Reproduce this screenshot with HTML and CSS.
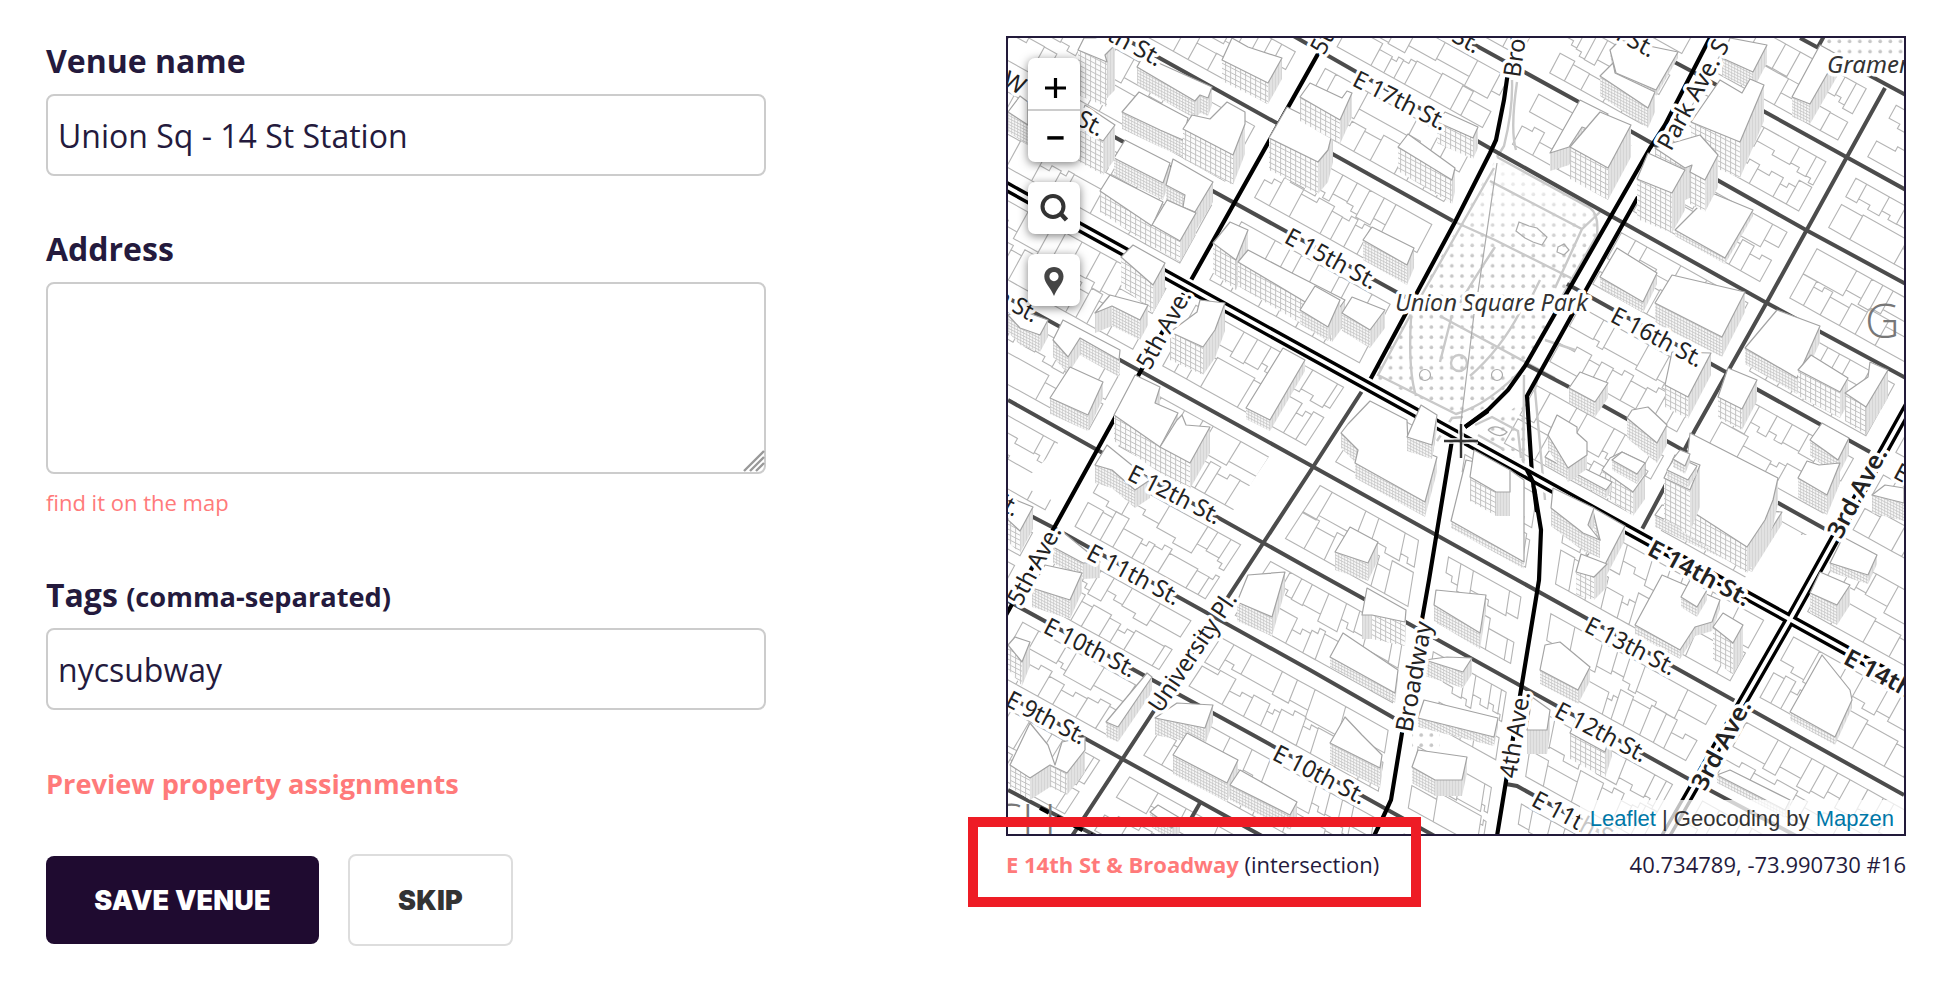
FILE: index.html
```html
<!DOCTYPE html>
<html lang="en">
<head>
<meta charset="utf-8">
<title>Venue editor</title>
<link rel="stylesheet" href="styles.css">
</head>
<body>
<main class="page">
  <form class="form">
    <label class="label" for="venue">Venue name</label>
    <input class="field" id="venue" type="text" value="Union Sq - 14 St Station">
    <label class="label" for="address">Address</label>
    <div class="area-wrap">
      <textarea class="field area" id="address"></textarea>
      <svg class="grip" width="22" height="22" viewBox="0 0 22 22"><path d="M1 21L21 1M7 21L21 7M13 21L21 13"/></svg>
    </div>
    <a class="find">find it on the map</a>
    <label class="label tags" for="tags">Tags <small>(comma-separated)</small></label>
    <input class="field" id="tags" type="text" value="nycsubway">
    <a class="preview">Preview property assignments</a>
    <div class="buttons">
      <button class="btn primary" type="button">SAVE VENUE</button>
      <button class="btn" type="button">SKIP</button>
    </div>
  </form>

  <section class="side">
    <div class="map">
      <svg class="canvas" width="896" height="796" viewBox="1008 38 896 796">
        <defs>
          <pattern id="grid" width="5" height="5" patternUnits="userSpaceOnUse" patternTransform="skewY(27)"><rect width="5" height="5" fill="#fcfcfc"/><path d="M0 .5H5M.5 0V5" stroke="#c2c2c2" stroke-width=".9"/></pattern>
          <pattern id="fine" width="3" height="3" patternUnits="userSpaceOnUse" patternTransform="skewY(27)"><rect width="3" height="3" fill="#f6f6f6"/><path d="M0 .5H3M.5 0V3" stroke="#c4c4c4" stroke-width=".7"/></pattern>
          <pattern id="side" width="3" height="3" patternUnits="userSpaceOnUse"><rect width="3" height="3" fill="#e2e2e2"/><path d="M.5 0V3" stroke="#d2d2d2" stroke-width=".8"/></pattern>
          <pattern id="dots" width="10.2" height="10.2" patternUnits="userSpaceOnUse" x="1459" y="273"><circle cx="3" cy="3" r="1.8" fill="#c6c6c6"/></pattern>
          <linearGradient id="fade" x1="0" y1="150" x2="0" y2="260" gradientUnits="userSpaceOnUse"><stop offset="0" stop-color="#fff" stop-opacity=".9"/><stop offset="1" stop-color="#fff" stop-opacity="0"/></linearGradient>
        </defs>
        <g id="lots" class="lots"></g>
        <path d="M1270 455L1306 473L1268 532L1232 512ZM1775 535L1822 535L1790 605L1742 582ZM1070 425L1092 450L1062 505L1020 485L1050 455Z" fill="#fff"/>
        <g>
          <path d="M1497 157L1600 215L1597 235L1555 310L1525 366L1490 405L1466 418L1373 378Z" fill="#fff"/>
          <path d="M1497 157L1600 215L1597 235L1555 310L1525 366L1490 405L1466 418L1373 378Z" fill="url(#dots)"/>
          <path d="M1497 157L1600 215L1597 235L1540 330L1373 378Z" fill="url(#fade)"/>
          <path d="M1527 398L1532 470L1478 435Z" fill="url(#dots)"/>
          <path d="M1826 38H1904V62H1826Z" fill="#fff"/>
          <path d="M1826 38H1904V62H1826Z" fill="url(#dots)"/>
          <path d="M1412 730H1440V752H1412Z" fill="url(#dots)"/>
        </g>
        <g class="paths">
          <path d="M1497 157L1590 208Q1599 214 1597 235L1553 312M1494 168L1412 312L1378 375L1456 414Q1490 404 1525 366M1490 181L1582 229L1600 212M1582 229L1555 288M1455 222L1495 240L1575 280M1495 247Q1470 285 1460 303M1440 316L1555 378M1411 318Q1408 370 1416 396M1452 315L1440 362M1520 312Q1500 350 1470 376M1540 280L1530 300M1512 80Q1513 110 1504 146L1497 157M1517 82Q1510 130 1516 150M1475 425L1492 417L1518 431L1521 458M1478 435L1503 449M1437 441L1452 418L1463 417M1538 375L1535 390L1545 500M1524 375L1523 500M1545 340L1575 350"/>
          <circle cx="1459" cy="363" r="8"/>
        </g>
        <g class="thin">
          <circle cx="1425" cy="375" r="5.5"/><circle cx="1497" cy="375" r="5.5"/>
          <path d="M1497 163L1478 292M1474 314L1460 430M1519 222L1529 226L1537 228L1547 237L1542 245L1533 242L1525 238L1516 231ZM1558 247L1564 244L1569 250L1564 255L1557 252ZM1488 430Q1495 423 1507 432Q1500 440 1488 430"/>
        </g>
        <g class="minor">
          <path d="M1120 36L1453 221M1567 284L1870 452"/><path d="M1290 34L1500 154L1765 302L1906 378"/><path d="M1455 34L1577 101L1806 230L1906 284"/>
          <path d="M1635 41L1695 73L1765 112L1906 190"/><path d="M1800 38L1906 95"/><path d="M1080 118L1420 305"/><path d="M1527 365L1569 387"/><path d="M1600 404L1825 529"/>
          <path d="M1008 298L1310 465L1586 618L1904 795"/><path d="M1008 400L1310 569L1685 777L1800 838"/>
          <path d="M1008 504L1054 528L1310 670L1394 718"/><path d="M1506 784L1517 786L1600 832"/><path d="M1008 601L1253 735L1440 839"/><path d="M1008 696L1262 836"/>
          <path d="M1008 790L1100 838"/>
          <path d="M1364 388L1313 467L1228 597L1150 717L1072 836"/><path d="M1200 803L1188 824"/>
          <path d="M1824 36L1818 47M1885 88L1848 155L1767 302L1695 430L1640 533"/>
        </g>
        <g class="major">
          <path d="M1337 20L1190 282L1054 528L1000 626"/>
          <path d="M1514 30L1504 100L1496 140L1490 153L1455 222L1370 380"/>
          <path d="M1452 440L1429 580L1402 733L1391 800L1385 813L1374 836"/>
          <path d="M1714 30L1665 125L1650 148L1525 366L1508 390L1488 410L1465 427"/>
          <path d="M1638 197L1587 288L1527 396L1532 475L1541 530L1539 580L1497 836"/>
          <path d="M1040 808L1092 835" stroke-dasharray="10 9"/>
          <g class="casing"><path d="M1000 183L1860 658L1920 691"/><path d="M1912 400L1788 623L1660 846"/></g>
          <g class="twin"><path d="M1000 183L1860 658L1920 691"/><path d="M1912 400L1788 623L1660 846"/></g>
          <g class="core"><path d="M1000 183L1860 658L1920 691"/><path d="M1912 400L1788 623L1660 846"/></g>
          <path d="M1465 427L1488 411M1527 470L1533 482L1537 512"/>
        </g>
        <g id="buildings" class="buildings"></g>
        <g id="names" class="names"></g>
        <g class="names">
          <text class="park" x="1395" y="311" textLength="193">Union Square Park</text>
          <text class="park" x="1827" y="73">Gramercy</text>
          <text class="area-name" x="1865" y="338">G</text>
          <text class="area-name" x="992" y="838">CH</text>
        </g>
        <path d="M1444 441H1478M1461 424V458" stroke="#fff" stroke-opacity=".8" stroke-width="6"/>
        <path d="M1444 441H1478M1461 424V458" stroke="#333" stroke-width="2.4"/>
      </svg>
      <div class="controls">
        <div class="ctl zoom">
          <svg width="52" height="51" viewBox="0 0 52 51"><path d="M17 30H38M27.500 20V40" stroke="#000" stroke-width="3.200"/></svg>
          <svg class="minus" width="52" height="51" viewBox="0 0 52 51"><path d="M19 28H36" stroke="#000" stroke-width="3.600"/></svg>
        </div>
        <div class="ctl"><svg width="52" height="52" viewBox="0 0 52 52"><circle cx="25" cy="24.500" r="10.500" fill="none" stroke="#333" stroke-width="4"/><path d="M32 31L38.500 38" stroke="#333" stroke-width="4.500"/></svg></div>
        <div class="ctl"><svg width="52" height="52" viewBox="0 0 52 52"><path fill-rule="evenodd" fill="#444" d="M26 13C20.500 13 16.300 17 16.300 22.500C16.300 29 23 34 26 42C29 34 35.500 29 35.500 22.500C35.500 17 31.500 13 26 13ZM26 18A4.600 4.600 0 1 1 26 27.200A4.600 4.600 0 1 1 26 18Z"/></svg></div>
      </div>
      <div class="attribution"><a>Leaflet</a> | Geocoding by <a>Mapzen</a></div>
    </div>
    <div class="caption"><span><b>E 14th St &amp; Broadway</b> (intersection)</span><span>40.734789, -73.990730 #16</span></div>
    <div class="highlight"></div>
  </section>
</main>
<script src="map.js"></script>
</body>
</html>
```
FILE: styles.css
```css
* { box-sizing: border-box; }
body { margin: 0; background: #fff; color: #241a3d; font-family: "Open Sans", "Noto Sans", sans-serif; }
.page { display: grid; grid-template-columns: 720px 900px; column-gap: 240px; padding: 36px 54px 0 46px; height: 986px; overflow: hidden; }
.form { display: flex; flex-direction: column; padding-top: 3px; }
.label { font-size: 32px; font-weight: 700; line-height: 44px; margin-bottom: 11px; }
.label small { font-size: 27.2px; line-height: 1; }
.field { display: block; width: 720px; height: 82px; margin: 0 0 51px; padding: 0 10px; border: 2px solid #ccc; border-radius: 8px; background: #fff; color: #241a3d; font: 32px "Open Sans", "Noto Sans", sans-serif; outline: none; }
.area-wrap { position: relative; height: 192px; }
.area { height: 192px; margin: 0; resize: none; }
.grip { position: absolute; right: 1px; bottom: 2px; fill: none; stroke: #999; stroke-width: 2.4; }
.find { margin-top: 13px; font-size: 22px; line-height: 30px; color: #ff7a7a; }
.tags { height: 44px; margin-top: 56px; }
.preview { margin-top: 4px; font-size: 27.2px; line-height: 38px; font-weight: 700; color: #ff7a7a; }
.buttons { display: flex; align-items: center; gap: 29px; margin-top: 51px; }
.btn { width: 165px; height: 92px; padding: 0; border: 2px solid #ddd; border-radius: 8px; background: #fff; color: #333; font: 900 27px Inter, "Open Sans", sans-serif; letter-spacing: 0.2px; }
.btn.primary { width: 273px; height: 88px; border: 0; background: #1f0b30; color: #fff; }

.side { position: relative; }
.map { position: relative; width: 900px; height: 800px; border: 2px solid #221a3a; overflow: hidden; }
.canvas { display: block; background: #fff; }
.lots { fill: none; stroke: #b4b4b4; stroke-width: 1.1; }
.paths { fill: none; stroke: #c9c9c9; stroke-width: 2.4; }
.thin { fill: none; stroke: #aaa; stroke-width: 1.2; }
.minor { fill: none; stroke: #4c4c4c; stroke-width: 4; }
.major { fill: none; stroke: #000; stroke-width: 4.2; }
.casing { stroke: #fff; stroke-width: 16; }
.twin { stroke-width: 10.6; }
.core { stroke: #fff; stroke-width: 3.8; }
.buildings path { stroke-linejoin: round; }
.roof { fill: #fff; stroke: #a3a3a3; stroke-width: 1.2; }
.names text { font: 24px "Noto Sans", "Open Sans", sans-serif; fill: #222; stroke: #fff; stroke-width: 7px; stroke-linejoin: round; paint-order: stroke; }
.names .bold { font-weight: 600; }
.names .park { font-style: italic; fill: #333; }
.names .area-name { font: 300 48px "Open Sans", sans-serif; fill: #777; stroke: none; }

.controls { position: absolute; left: 20px; top: 20px; display: flex; flex-direction: column; gap: 20px; }
.ctl { width: 52px; height: 52px; border-radius: 7px; background: #fff; box-shadow: 0 2px 10px rgba(0, 0, 0, 0.5); }
.ctl svg { display: block; }
.zoom { height: 104px; }
.minus { border-top: 2px solid #ccc; }
.attribution { position: absolute; right: 0; bottom: 0; height: 34px; padding: 0 10px 0 10px; background: rgba(255, 255, 255, 0.75); color: #333; font: 22px/37px "Liberation Sans", Arial, sans-serif; white-space: nowrap; }
.attribution a { color: #0078a8; }
.caption { display: flex; justify-content: space-between; margin-top: 13px; font-size: 22px; line-height: 30px; }
.caption b { color: #ff7a7a; }
.highlight { position: absolute; left: -38px; top: 781px; width: 453px; height: 90px; border: 10px solid #ee1c25; }
```
FILE: map.js
```js
// Street grid: intercept of each cross street at x = 1300; avenues solved per street.
const streets = [-336, -240, -144, -52, 40, 136, 238, 346, 459, 562, 667, 762, 856, 960];
const slope = 0.555;
const fifth = c => (1733 - 0.545 * c) / 1.3;
const upperBroadway = c => (1941 - 0.522 * c) / 1.287;
const university = c => (2083 - 0.652 * c) / 1.359;
const broadway = c => (1635.6 - 0.16 * c) / 1.088;
const fourth = c => (1740 - 0.155 * c) / 1.085;
const park = c => (2126.5 - 0.5545 * c) / 1.305;
const irving = c => (2327 - 0.5506 * c) / 1.303;
const third = c => (2520 - 0.553 * c) / 1.304;
const west = c => fifth(c) - 330;
const east = c => third(c) + 330;

let seed = 11;
const rnd = () => (seed = (seed * 16807) % 2147483647) / 2147483647;

function blockLots(c0, c1, left, right) {
  const p = (x0, x1, v) => {
    const y0 = c0 + slope * (x0 - 1300), y1 = c1 + slope * (x1 - 1300);
    return [x0 + (x1 - x0) * v, y0 + (y1 - y0) * v];
  };
  const l0 = left(c0) + 15, r0 = right(c0) - 15, l1 = left(c1) + 15, r1 = right(c1) - 15;
  const at = (u, v) => p(l0 + (r0 - l0) * u, l1 + (r1 - l1) * u, v).map(n => n.toFixed(1)).join(' ');
  const width = r0 - l0;
  let d = '';
  for (const row of [0, 1]) {
    let u = 0;
    while (u < 1) {
      let w = (10 + rnd() * rnd() * 40) / width;
      if (u + w > 0.96) w = 1 - u;
      const deep = 0.22 + rnd() * 0.14;
      const a = row ? 0.85 : 0.15, b = row ? 0.85 - deep : 0.15 + deep;
      const n = u + w;
      d += `M${at(u, a)}L${at(n, a)}L${at(n, b)}`;
      if (rnd() > 0.65) {
        const m = u + w * 0.5, e = b + (row ? 0.06 : -0.06);
        d += `L${at(m, b)}L${at(m, e)}L${at(u, e)}Z`;
      } else d += `L${at(u, b)}Z`;
      u = n;
    }
  }
  return d;
}

let lots = '';
for (let i = 0; i < streets.length - 1; i++) {
  const c = streets[i];
  let aves;
  if (c < 340) aves = [west, fifth, upperBroadway, park, irving, third, east];
  else aves = [west, fifth, university, broadway, fourth, third, east];
  for (let k = 0; k < aves.length - 1; k++) {
    if (c >= 40 && c < 340 && k === 2) continue;
    lots += blockLots(c, streets[i + 1], aves[k], aves[k + 1]);
  }
}
document.getElementById('lots').innerHTML = `<path d="${lots}"/>`;

// Raised buildings: roof outline (clockwise), then wall height.
const buildings = [
  [[1078,50,1084,38,1112,38,1115,45,1105,55,1107,62],45],
  [[1137,67,1143,56,1212,87,1208,98,1200,95,1195,101],18],
  [[1122,112,1139,92,1188,118,1183,140,1160,130],17],
  [[1183,129,1192,115,1210,119,1227,102,1245,112,1245,124,1233,155],30],
  [[1114,158,1125,140,1170,163,1163,183],17],
  [[1100,191,1110,175,1163,202,1152,226],21],
  [[1166,185,1173,159,1213,182,1195,212,1183,207,1185,195],20],
  [[1152,225,1167,200,1196,213,1180,241],21],
  [[1222,60,1232,38,1248,47,1282,58,1268,83],21],
  [[1078,127,1085,105,1115,125,1103,141],34],
  [[1121,257,1133,245,1165,263,1153,285],28],
  [[1008,112,1020,96,1028,102,1028,125],20],
  [[1269,138,1287,107,1333,130,1328,150,1318,162],32],
  [[1213,243,1230,222,1248,230,1240,250,1236,260],30],
  [[1238,262,1248,250,1290,272,1345,300,1332,318],24],
  [[1300,97,1310,83,1342,98,1347,91,1352,93,1340,120],24],
  [[1437,122,1445,112,1478,127,1473,138],21],
  [[1398,147,1408,134,1455,168,1452,180],24],
  [[1363,240,1372,227,1414,248,1407,265],20],
  [[1610,50,1620,40,1678,52,1656,90,1616,73],6],
  [[1550,153,1580,100,1608,114,1598,133,1582,127,1569,147],18],
  [[1600,76,1613,63,1615,73,1655,92,1648,108],20],
  [[1570,147,1600,112,1631,125,1608,168],32],
  [[1722,58,1730,38,1767,45,1753,72],18],
  [[1691,122,1720,80,1742,93,1750,79,1764,85,1740,142],36],
  [[1792,97,1820,45,1838,55,1810,104],20],
  [[1675,230,1712,193,1753,210,1725,258],6],
  [[1655,148,1700,135,1718,155,1705,180,1690,172,1692,165,1685,168],32],
  [[1637,179,1648,153,1685,170,1672,193],40],
  [[1600,277,1617,248,1657,273,1643,302],11],
  [[1655,303,1672,275,1745,292,1722,337],20],
  [[1745,348,1777,310,1820,326,1797,378],16],
  [[1798,370,1811,355,1848,378,1840,392],26],
  [[1845,393,1868,377,1870,362,1888,370,1866,407],28],
  [[1665,385,1672,352,1711,353,1688,397],22],
  [[1718,397,1728,368,1757,380,1742,409],21],
  [[1810,440,1822,423,1849,438,1838,460],16],
  [[1798,478,1807,461,1819,465,1840,463,1827,495],20],
  [[1627,418,1632,410,1648,407,1667,425,1657,443],20],
  [[1602,470,1610,458,1622,452,1645,463,1645,475,1633,492],24],
  [[1612,460,1622,452,1645,463,1637,474],10],
  [[1655,515,1662,505,1782,512,1752,560],12],
  [[1682,505,1690,433,1778,478,1773,500,1765,520,1747,547],26],
  [[1664,478,1675,455,1700,465,1690,490],42],
  [[1667,470,1676,456,1697,466,1688,480],8],
  [[1673,459,1680,450,1690,454,1685,466],8],
  [[1569,388,1580,372,1608,383,1595,402],15],
  [[1545,457,1549,451,1612,482,1606,490],8],
  [[1548,435,1557,415,1577,427,1577,433,1587,442,1587,455,1568,468],14],
  [[1592,507,1625,526,1598,578,1582,562,1600,540],14],
  [[1551,508,1553,488,1594,508,1588,525,1600,540,1583,533],18],
  [[1341,433,1348,424,1370,401,1407,420,1408,445,1437,457,1425,502,1355,463,1358,450],15],
  [[1407,437,1421,405,1437,415,1432,445],14],
  [[1451,521,1466,460,1510,470,1524,480,1524,562],7],
  [[1470,477,1474,450,1510,470,1510,492,1496,492],24],
  [[1335,552,1350,527,1378,542,1368,563],18],
  [[1300,310,1315,286,1340,300,1328,327],14],
  [[1342,313,1352,297,1385,310,1370,330],18],
  [[1008,315,1020,310,1048,320,1040,335,1020,328],17],
  [[1095,313,1110,295,1148,305,1140,320,1112,306],20],
  [[1053,340,1063,320,1120,350,1119,360,1080,338,1068,357],17],
  [[1050,398,1070,367,1103,382,1088,415],16],
  [[1170,332,1197,312,1200,300,1225,303,1215,330,1203,347],28],
  [[1246,408,1283,348,1305,360,1270,420],11],
  [[1114,415,1135,375,1160,387,1155,403,1178,413,1160,447],26],
  [[1160,447,1177,420,1182,415,1186,425,1210,427,1190,463],26],
  [[1095,465,1107,445,1150,480,1135,490,1112,470],18],
  [[1008,520,1008,497,1033,507,1020,531],22],
  [[1053,547,1064,533,1100,562,1083,563],16],
  [[1032,588,1045,565,1082,573,1070,600],19],
  [[1008,645,1015,637,1030,642,1022,662],24],
  [[1106,722,1147,673,1152,677,1118,727],15],
  [[1237,602,1248,575,1285,572,1272,617],19],
  [[1155,718,1177,703,1213,705,1205,728],17],
  [[1173,755,1187,733,1238,760,1227,783],19],
  [[1230,785,1240,770,1297,802,1290,815],15],
  [[1010,765,1030,723,1048,745,1055,765,1062,742,1085,737,1085,750,1067,773,1050,765,1030,778],22],
  [[1150,812,1158,805,1180,818,1172,828],14],
  [[1362,615,1367,588,1406,610,1405,622,1372,615],24],
  [[1330,657,1343,633,1398,670,1395,693],10],
  [[1330,743,1345,717,1362,735,1382,755,1380,768],20],
  [[1434,605,1436,590,1486,595,1480,633],16],
  [[1425,660,1447,657,1472,658,1463,672],16],
  [[1418,718,1424,700,1498,718,1494,737],9],
  [[1412,767,1418,750,1467,757,1462,780,1435,780],16],
  [[1540,670,1545,645,1560,642,1590,667,1578,690],14],
  [[1527,730,1532,697,1550,710,1547,730],24],
  [[1570,733,1578,715,1612,730,1605,752],26],
  [[1576,572,1581,554,1607,564,1594,577],23],
  [[1635,625,1662,575,1720,600,1712,622,1695,627,1680,650],9],
  [[1681,597,1690,580,1707,590,1697,607],10],
  [[1713,627,1723,613,1743,625,1733,643],32],
  [[1810,593,1820,572,1850,585,1837,605],20],
  [[1830,563,1843,537,1877,555,1868,575],9],
  [[1872,495,1885,485,1904,488,1904,503],18],
  [[1790,712,1822,655,1850,690,1852,700,1835,737],8],
  [[1717,775,1730,770,1790,800,1785,810],8]
];

let html = '';
for (const [roof, h] of buildings) {
  const pts = [];
  for (let i = 0; i < roof.length; i += 2) pts.push([roof[i], roof[i + 1]]);
  const walls = pts
    .map((a, i) => [a, pts[(i + 1) % pts.length]])
    .filter(([a, b]) => b[0] < a[0])
    .sort((m, n) => m[0][1] + m[1][1] - n[0][1] - n[1][1]);
  for (const [a, b] of walls) {
    const fill = a[1] > b[1] ? (h > 20 ? 'grid' : 'fine') : 'side';
    html += `<path d="M${a}L${b}V${b[1] + h}L${a[0]} ${a[1] + h}Z" fill="url(#${fill})"/>`;
  }
  html += `<path class="roof" d="M${pts.join('L')}Z"/>`;
}
document.getElementById('buildings').innerHTML = html;

// Street names: text, baseline start, baseline end, weight.
const names = [
  ['E 18th St.', 1066, 18, 1159, 68], ['W 16th St.', 1003, 86, 1101, 138], ['W 15th St.', 945, 275, 1035, 324],
  ['E 17th St.', 1353, 86, 1444, 132], ['E 15th St.', 1285, 243, 1374, 291], ['E 18th St.', 1386, 6, 1477, 55],
  ['E 19th St.', 1561, 10, 1652, 59], ['W 12th St.', 928, 470, 1016, 518], ['E 12th St.', 1128, 480, 1218, 526],
  ['E 11th St.', 1087, 559, 1177, 607], ['E 10th St.', 1044, 633, 1133, 679], ['E 9th St.', 1006, 706, 1083, 746],
  ['E 10th St.', 1273, 760, 1363, 806], ['5th Ave.', 1326, 57, 1368, -20], ['5th Ave.', 1152, 372, 1194, 296],
  ['5th Ave.', 1023, 608, 1064, 532], ['University Pl.', 1163, 715, 1240, 600], ['Broadway', 1414, 734, 1434, 624],
  ['4th Ave.', 1518, 780, 1532, 694], ['Broadway', 1522, 79, 1538, -30], ['Park Ave. S', 1673, 153, 1732, 46],
  ['E 16th St.', 1611, 322, 1700, 369], ['E 13th St.', 1585, 632, 1673, 677], ['E 12th St.', 1555, 717, 1644, 764],
  ['E 11th St.', 1532, 806, 1622, 854], ['E 15th St.', 1894, 478, 1984, 526],
  ['E 14th St.', 1648, 555, 1747, 608, 1], ['E 14th St.', 1844, 664, 1943, 717, 1],
  ['3rd Ave.', 1843, 541, 1890, 454, 1], ['3rd Ave.', 1707, 793, 1754, 706, 1]
];
document.getElementById('names').innerHTML = names.map(([t, x0, y0, x1, y1, bold]) => {
  const len = Math.hypot(x1 - x0, y1 - y0), deg = Math.atan2(y1 - y0, x1 - x0) * 180 / Math.PI;
  return `<text${bold ? ' class="bold"' : ''} textLength="${len.toFixed(1)}" lengthAdjust="spacingAndGlyphs" transform="translate(${x0 - 2} ${y0 - 1}) rotate(${deg.toFixed(2)})">${t}</text>`;
}).join('');
```
